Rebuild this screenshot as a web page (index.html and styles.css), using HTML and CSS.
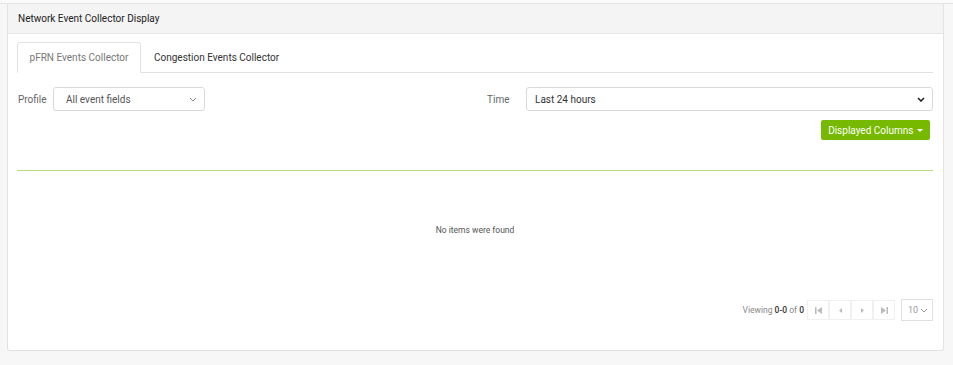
FILE: index.html
```html
<html>

<head>
    <title>Network Event Collector Display</title>
    <link rel="stylesheet" href="styles.css">
</head>

<body>
    <div class="top-strip"></div>
    <main>
        <div class="panel">
            <div class="panel-header">Network Event Collector Display</div>
            <div class="panel-body">
                <div class="tabs">
                    <div class="tab active">pFRN Events Collector</div>
                    <div class="tab">Congestion Events Collector</div>
                </div>
                <div class="filters">
                    <div class="filter profile">
                        <span class="filter-label">Profile</span>
                        <div class="select select-small">
                            <span>All event fields</span>
                            <svg width="8" height="5" viewBox="0 0 8 5"><path d="M1 1l3 3 3-3" fill="none" stroke="#888" stroke-width="1"/></svg>
                        </div>
                    </div>
                    <div class="filter time">
                        <span class="filter-label">Time</span>
                        <div class="select select-wide">
                            <span>Last 24 hours</span>
                            <svg width="8" height="5" viewBox="0 0 8 5"><path d="M1 1l3 3 3-3" fill="none" stroke="#222" stroke-width="1.6"/></svg>
                        </div>
                    </div>
                </div>
                <div class="toolbar">
                    <button class="columns-btn">Displayed Columns <span class="caret"></span></button>
                </div>
                <div class="table-head"></div>
                <div class="empty">No items were found</div>
                <div class="pager">
                    <span class="viewing">Viewing <b>0-0</b> of <b>0</b></span>
                    <div class="pager-buttons">
                        <span class="pbtn"><svg width="7" height="7" viewBox="0 0 7 7"><rect x="0" y="0" width="1.5" height="7" fill="#bbb"/><path d="M7 0v7L2 3.5z" fill="#bbb"/></svg></span>
                        <span class="pbtn"><svg width="3" height="5" viewBox="0 0 3 5"><path d="M3 0v5L0 2.5z" fill="#bbb"/></svg></span>
                        <span class="pbtn"><svg width="3" height="5" viewBox="0 0 3 5"><path d="M0 0v5l3-2.5z" fill="#bbb"/></svg></span>
                        <span class="pbtn"><svg width="7" height="7" viewBox="0 0 7 7"><path d="M0 0v7l5-3.5z" fill="#bbb"/><rect x="5.5" y="0" width="1.5" height="7" fill="#bbb"/></svg></span>
                    </div>
                    <div class="page-size">
                        <span>10</span>
                        <svg width="8" height="5" viewBox="0 0 8 5"><path d="M1 1l3 3 3-3" fill="none" stroke="#999" stroke-width="1"/></svg>
                    </div>
                </div>
            </div>
        </div>
    </main>
</body>

</html>
```

FILE: styles.css
```css
body {
    margin: 0;
    background-color: #f7f7f7;
    font-family: "Roboto", "Liberation Sans", sans-serif;
    font-size: 10px;
    color: #333;
}

.top-strip {
    height: 3px;
    border-bottom: 1px solid #e4e4e4;
    background-color: #fafafa;
}

main {
    padding: 0 9px 0 7px;
}

.panel {
    background-color: #fff;
    border: 1px solid #e3e3e3;
    border-top: none;
    border-radius: 0 0 3px 3px;
    height: 347px;
    box-sizing: border-box;
}

.panel-header {
    height: 30px;
    display: flex;
    align-items: center;
    padding-left: 10px;
    background-color: #f4f4f4;
    border-bottom: 1px solid #e6e6e6;
    box-sizing: border-box;
    color: #222;
}

.panel-body {
    padding: 8px 10px 0 9px;
}

.tabs {
    display: flex;
    height: 30px;
    border-bottom: 1px solid #e2e2e2;
}

.tab {
    display: flex;
    align-items: center;
    padding: 0 13px;
    color: #333;
    white-space: nowrap;
}

.tab.active {
    color: #777;
    width: 124px;
    box-sizing: border-box;
    justify-content: center;
    border: 1px solid #e2e2e2;
    border-bottom: 1px solid #fff;
    border-radius: 3px 3px 0 0;
    margin-bottom: -1px;
    background-color: #fff;
}

.filters {
    display: flex;
    margin-top: 14px;
    height: 24px;
}

.filter {
    display: flex;
    align-items: center;
}

.filter-label {
    color: #666;
}

.profile {
    width: 470px;
}

.profile .filter-label {
    margin-left: 1px;
    width: 35px;
}

.time {
    flex: 1;
}

.time .filter-label {
    width: 39px;
}

.select {
    height: 24px;
    box-sizing: border-box;
    border: 1px solid #d9d9d9;
    border-radius: 3px;
    display: flex;
    align-items: center;
    justify-content: space-between;
    padding: 0 7px 0 12px;
    color: #555;
}

.select-small {
    width: 152px;
}

.select-wide {
    flex: 1;
    padding-left: 8px;
    color: #333;
}

.toolbar {
    display: flex;
    justify-content: flex-end;
    margin-top: 9px;
    padding-right: 3px;
}

.columns-btn {
    background-color: #76b900;
    color: #fff;
    border: none;
    border-radius: 2px;
    height: 20px;
    width: 109px;
    padding: 0;
    font-family: inherit;
    font-size: 10px;
}

.caret {
    display: inline-block;
    border-left: 3px solid transparent;
    border-right: 3px solid transparent;
    border-top: 3px solid #fff;
    vertical-align: middle;
    margin-left: 1px;
}

.table-head {
    margin-top: 30px;
    height: 1px;
    background-color: #b6df78;
}

.empty {
    text-align: center;
    font-size: 8.5px;
    color: #555;
    margin-top: 54px;
}

.pager {
    display: flex;
    justify-content: flex-end;
    align-items: center;
    margin-top: 64px;
    padding-right: 0;
}

.viewing {
    font-size: 8.5px;
    color: #888;
    margin-right: 3px;
}

.viewing b {
    color: #333;
    font-weight: 500;
}

.pager-buttons {
    display: flex;
}

.pbtn {
    width: 22px;
    height: 20px;
    box-sizing: border-box;
    border: 1px solid #f0f0f0;
    display: flex;
    align-items: center;
    justify-content: center;
}

.page-size {
    margin-left: 6px;
    width: 32px;
    height: 22px;
    box-sizing: border-box;
    border: 1px solid #e0e0e0;
    display: flex;
    align-items: center;
    justify-content: space-between;
    padding: 0 4px 0 6px;
    font-size: 9px;
    color: #999;
}
```
